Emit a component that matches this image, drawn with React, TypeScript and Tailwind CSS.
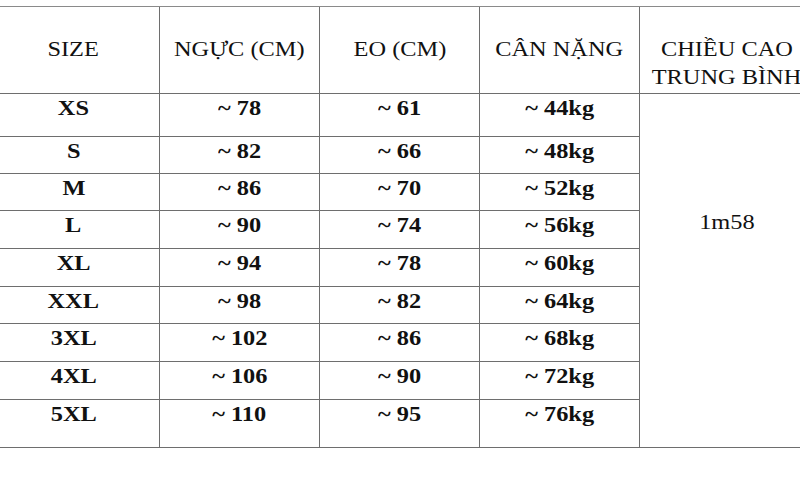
const headers = ["SIZE", "NGỰC (CM)", "EO (CM)", "CÂN NẶNG"];

const rows = [
  { size: "XS", chest: "~ 78", waist: "~ 61", weight: "~ 44kg" },
  { size: "S", chest: "~ 82", waist: "~ 66", weight: "~ 48kg" },
  { size: "M", chest: "~ 86", waist: "~ 70", weight: "~ 52kg" },
  { size: "L", chest: "~ 90", waist: "~ 74", weight: "~ 56kg" },
  { size: "XL", chest: "~ 94", waist: "~ 78", weight: "~ 60kg" },
  { size: "XXL", chest: "~ 98", waist: "~ 82", weight: "~ 64kg" },
  { size: "3XL", chest: "~ 102", waist: "~ 86", weight: "~ 68kg" },
  { size: "4XL", chest: "~ 106", waist: "~ 90", weight: "~ 72kg" },
  { size: "5XL", chest: "~ 110", waist: "~ 95", weight: "~ 76kg" },
];

function Stretch({ children }: { children: React.ReactNode }) {
  return (
    <span className="inline-block origin-center scale-x-[1.16] whitespace-nowrap">
      {children}
    </span>
  );
}

export default function App() {
  return (
    <div className="h-[494px] w-[800px] overflow-hidden bg-white [font-family:'Liberation_Serif',serif] text-[21px] leading-[28px] text-[#111]">
      <div className="ml-[-12px] mt-[6px] grid w-[826px] grid-cols-[172px_160px_160px_160px_174px] grid-rows-[87px_43px_37px_37px_38px_38px_37px_38px_38px_48px] border-t border-[#8a8a8a]">
        {headers.map((h) => (
          <div
            key={h}
            className="flex justify-center border-b border-r border-[#6e6e6e] pt-[28px]"
          >
            <Stretch>{h}</Stretch>
          </div>
        ))}
        <div className="flex flex-col items-center border-b border-r border-[#6e6e6e] pt-[28px]">
          <Stretch>CHIỀU CAO</Stretch>
          <Stretch>TRUNG BÌNH</Stretch>
        </div>

        {rows.map((r, i) => (
          <div key={r.size} className="contents">
            <div className="flex justify-center border-b border-r border-[#6e6e6e] font-bold">
              <Stretch>{r.size}</Stretch>
            </div>
            <div className="flex justify-center border-b border-r border-[#6e6e6e] font-bold">
              <Stretch>{r.chest}</Stretch>
            </div>
            <div className="flex justify-center border-b border-r border-[#6e6e6e] font-bold">
              <Stretch>{r.waist}</Stretch>
            </div>
            <div className="flex justify-center border-b border-r border-[#6e6e6e] font-bold">
              <Stretch>{r.weight}</Stretch>
            </div>
            {i === 0 && (
              <div className="col-start-5 row-span-9 row-start-2 flex justify-center border-b border-r border-[#6e6e6e] pt-[114px]">
                <Stretch>1m58</Stretch>
              </div>
            )}
          </div>
        ))}
      </div>
    </div>
  );
}
